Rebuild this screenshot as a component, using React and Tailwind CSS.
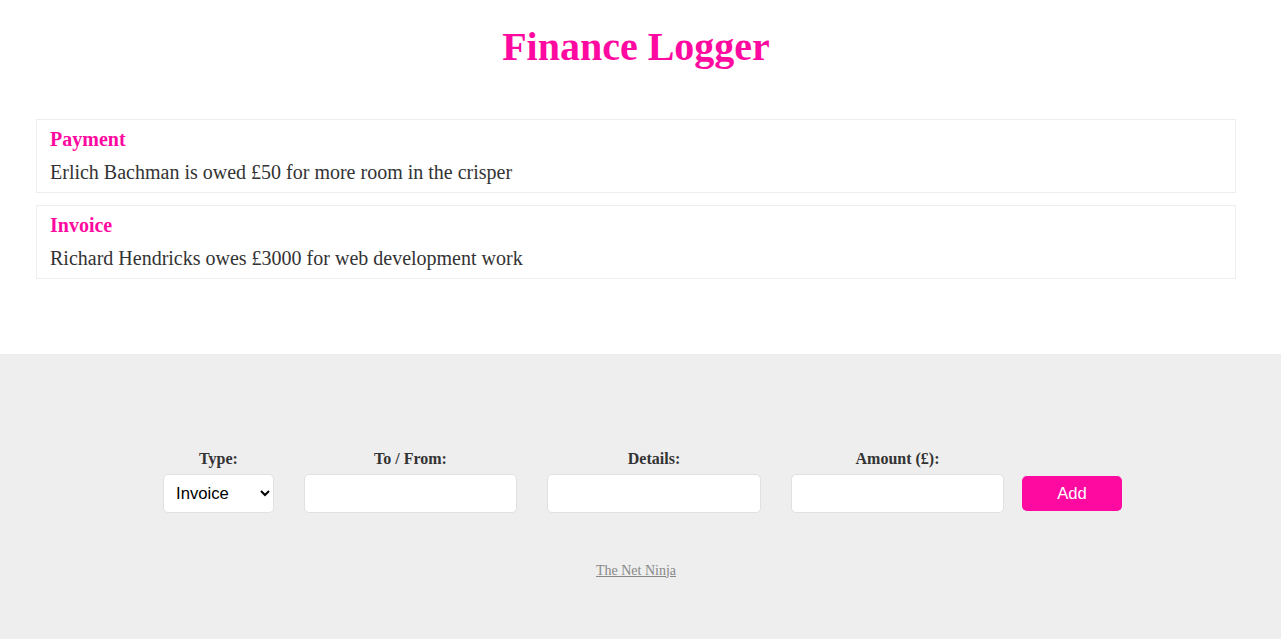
const serif = { fontFamily: '"Liberation Serif", "Times New Roman", serif' }

function Entry({type, text, className=''}){
  return (
    <li className={`border border-[#eee] px-[13px] pt-[7.5px] pb-[8.5px] list-none ${className}`}>
      <h4 className="text-[20px] font-bold leading-[23px] text-[#ff0aa1]">{type}</h4>
      <p className="text-[20px] leading-[23px] text-[#333] mt-[10px]">{text}</p>
    </li>
  )
}

function Field({label, children}){
  return (
    <div className="flex flex-col items-center">
      <label className="text-[16px] leading-[18px] font-bold text-[#333] mb-[5.5px]">{label}</label>
      {children}
    </div>
  )
}

export default function App(){
  const inputCls = "h-[39px] border border-[#e1e1e1] rounded-[5px] bg-white px-[7.5px] outline-none"
  return (
    <div className="min-h-[639px] bg-white" style={serif}>
      <header className="w-[1272px] text-center pt-[24px]">
        <h1 className="text-[40px] font-bold leading-[46px] text-[#ff0aa1]">Finance Logger</h1>
      </header>
      <ul className="w-[1200px] ml-[36px] mt-[49px]">
        <Entry type="Payment" text="Erlich Bachman is owed £50 for more room in the crisper" />
        <Entry type="Invoice" text="Richard Hendricks owes £3000 for web development work" className="mt-[12px]" />
      </ul>
      <footer className="mt-[75px] bg-[#eee] pt-[96px] pb-[75px]">
        <form className="flex items-end justify-center pl-[4px]" onSubmit={e=>e.preventDefault()}>
          <Field label="Type:">
            <select defaultValue="invoice" className="w-[111px] h-[39px] border border-[#e1e1e1] rounded-[5px] bg-white pl-[8px] pr-[4px] text-[16.67px] text-black" style={{fontFamily:'"Liberation Sans", Arial, sans-serif'}}>
              <option value="invoice">Invoice</option>
              <option value="payment">Payment</option>
            </select>
          </Field>
          <div className="ml-[30px]">
            <Field label="To / From:"><input type="text" className={`w-[213px] ${inputCls}`} /></Field>
          </div>
          <div className="ml-[30px]">
            <Field label="Details:"><input type="text" className={`w-[214px] ${inputCls}`} /></Field>
          </div>
          <div className="ml-[30px]">
            <Field label="Amount (£):"><input type="number" className={`w-[213px] ${inputCls}`} /></Field>
          </div>
          <button type="submit" className="ml-[18px] mb-[2px] w-[100px] h-[35px] rounded-[5px] bg-[#ff0aa1] text-white text-[16.67px]" style={{fontFamily:'"Liberation Sans", Arial, sans-serif'}}>Add</button>
        </form>
        <div className="w-[1272px] text-center mt-[45px]">
          <a href="#" className="text-[14px] leading-[16px] text-[#888] underline">The Net Ninja</a>
        </div>
      </footer>
    </div>
  )
}
